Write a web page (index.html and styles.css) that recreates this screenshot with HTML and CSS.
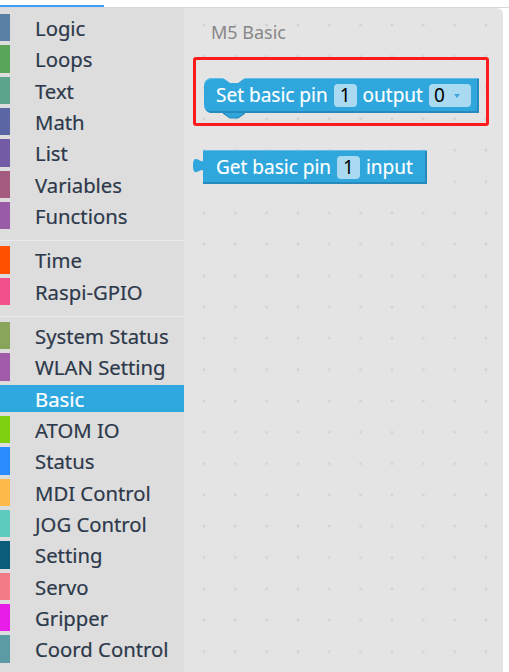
FILE: index.html
```html
<!DOCTYPE html>
<html lang="en">
<head>
<meta charset="utf-8">
<title>M5 Basic</title>
<link rel="stylesheet" href="styles.css">
</head>
<body>
<header class="topbar"><div class="tab-line"></div></header>
<div class="main">
  <nav class="toolbox">
    <div class="cat c-logic"><span class="swatch"></span><span class="label">Logic</span></div>
    <div class="cat c-loops"><span class="swatch"></span><span class="label">Loops</span></div>
    <div class="cat c-text"><span class="swatch"></span><span class="label">Text</span></div>
    <div class="cat c-math"><span class="swatch"></span><span class="label">Math</span></div>
    <div class="cat c-list"><span class="swatch"></span><span class="label">List</span></div>
    <div class="cat c-vars"><span class="swatch"></span><span class="label">Variables</span></div>
    <div class="cat c-func"><span class="swatch"></span><span class="label">Functions</span></div>
    <div class="sep"></div>
    <div class="cat c-time"><span class="swatch"></span><span class="label">Time</span></div>
    <div class="cat c-gpio"><span class="swatch"></span><span class="label">Raspi-GPIO</span></div>
    <div class="sep"></div>
    <div class="cat c-sys"><span class="swatch"></span><span class="label">System Status</span></div>
    <div class="cat c-wlan"><span class="swatch"></span><span class="label">WLAN Setting</span></div>
    <div class="cat c-basic selected"><span class="swatch"></span><span class="label">Basic</span></div>
    <div class="cat c-atom"><span class="swatch"></span><span class="label">ATOM IO</span></div>
    <div class="cat c-status"><span class="swatch"></span><span class="label">Status</span></div>
    <div class="cat c-mdi"><span class="swatch"></span><span class="label">MDI Control</span></div>
    <div class="cat c-jog"><span class="swatch"></span><span class="label">JOG Control</span></div>
    <div class="cat c-setting"><span class="swatch"></span><span class="label">Setting</span></div>
    <div class="cat c-servo"><span class="swatch"></span><span class="label">Servo</span></div>
    <div class="cat c-grip"><span class="swatch"></span><span class="label">Gripper</span></div>
    <div class="cat c-coord"><span class="swatch"></span><span class="label">Coord Control</span></div>
  </nav>
  <section class="workspace">
    <div class="flyout-title">M5 Basic</div>

    <div class="block block-set">
      <svg class="notch" width="22" height="5" viewBox="0 0 22 5"><path d="M0 0 L7 5 L15 5 L22 0 Z" fill="#e4e4e4"/></svg>
      <span class="btext">Set basic pin</span>
      <span class="field">1</span>
      <span class="btext">output</span>
      <span class="field dropdown">0<svg class="caret" width="6" height="4" viewBox="0 0 6 4"><path d="M0 0 L6 0 L3 4 Z" fill="#3ea6dc"/></svg></span>
      <svg class="tab" width="22" height="6" viewBox="0 0 22 6"><path d="M0 0 L7 5 L15 5 L22 0 Z" fill="#2fa7dd"/><path d="M0 0 L7 5 L15 5 L22 0" fill="none" stroke="#2789bc" stroke-width="1.2"/></svg>
    </div>

    <div class="block block-get">
      <svg class="out-tab" width="11" height="16" viewBox="0 0 11 16"><path d="M11 0 C11 10 0 -8 0 7.5 S11 5 11 15.5 Z" fill="#2fa7dd"/></svg>
      <span class="btext">Get basic pin</span>
      <span class="field">1</span>
      <span class="btext">input</span>
    </div>

    <div class="highlight"></div>
  </section>
  <div class="gutter"></div>
</div>
</body>
</html>
```
FILE: styles.css
```css
* { box-sizing: border-box; }
html, body { margin: 0; padding: 0; background: #ffffff; }
body {
  width: 509px;
  height: 672px;
  overflow: hidden;
  font-family: "Noto Sans", "Open Sans", sans-serif;
}

.topbar {
  height: 8px;
  padding-top: 5px;
  background: #ffffff;
  border-bottom: 1px solid #d9d9d9;
}
.tab-line {
  width: 104px;
  height: 2px;
  background: #3d9cf4;
}

.main {
  display: flex;
  height: 664px;
}

/* ---------- toolbox ---------- */
.toolbox {
  width: 184px;
  flex: none;
  background: #dddddd;
  padding-top: 6px;
}
.cat {
  display: flex;
  align-items: stretch;
  height: 27.33px;
  margin-bottom: 4px;
}
.swatch {
  width: 10px;
  flex: none;
  background: var(--c);
}
.label {
  margin-left: 25px;
  padding-top: 2px;
  font-size: 20.3px;
  line-height: 25px;
  color: #2d394b;
  white-space: nowrap;
  -webkit-text-stroke: 0.2px currentColor;
}
.cat.selected { background: #2fa8df; }
.cat.selected .label { color: #ffffff; }

.sep {
  height: 1px;
  margin: 11px 0 5px;
  background: #e9e9e9;
}

.c-logic   { --c: #5b80a5; }
.c-loops   { --c: #5ba55b; }
.c-text    { --c: #5ba58c; }
.c-math    { --c: #5b67a5; }
.c-list    { --c: #745ba5; }
.c-vars    { --c: #a55b80; }
.c-func    { --c: #995ba5; }
.c-time    { --c: #ff5000; }
.c-gpio    { --c: #f0508b; }
.c-sys     { --c: #88a55b; }
.c-wlan    { --c: #a25ba8; }
.c-basic   { --c: #2fa8df; }
.c-atom    { --c: #7fd00e; }
.c-status  { --c: #2b8cff; }
.c-mdi     { --c: #fdb94a; }
.c-jog     { --c: #5ecbbe; }
.c-setting { --c: #0c5b7b; }
.c-servo   { --c: #f27b87; }
.c-grip    { --c: #e81de8; }
.c-coord   { --c: #5c9aa4; }

/* ---------- workspace ---------- */
.workspace {
  position: relative;
  width: 319px;
  flex: none;
  border-top-right-radius: 6px;
  background-color: #e4e4e4;
  background-image: radial-gradient(circle, #d2d2d2 1.1px, rgba(210,210,210,0) 1.7px);
  background-size: 31.33px 31.33px;
  background-position: 4.33px 1.33px;
  padding: 12px 0 0 27px;
}
.gutter { flex: 1; background: #ffffff; }

.flyout-title {
  font-size: 18px;
  line-height: 24px;
  color: #878787;
}

.block {
  position: absolute;
  display: flex;
  align-items: center;
  gap: 6px;
  background: #2fa7dd;
  color: #ffffff;
  box-shadow: inset 0 1px 0 #62bfe9, inset -2px -2px 0 #2789bc;
}
.btext {
  font-size: 19px;
  line-height: 23px;
  white-space: nowrap;
  -webkit-text-stroke: 0.15px currentColor;
}
.field {
  display: flex;
  align-items: center;
  height: 23px;
  padding: 0 6px;
  border-radius: 4px;
  background: #a9daf2;
  color: #000000;
  font-size: 19px;
  line-height: 23px;
}
.field.dropdown {
  padding: 0 11px 0 5px;
  gap: 9px;
}
.caret { display: block; margin-top: 1px; }

.block-set {
  left: 20px;
  top: 70px;
  height: 35px;
  padding: 0 8px 0 12px;
  border-radius: 8px 0 0 8px;
}
.block-set .notch {
  position: absolute;
  left: 19px;
  top: 0;
}
.block-set .tab {
  position: absolute;
  left: 19px;
  top: 35px;
}

.block-get {
  left: 19px;
  top: 142px;
  height: 34px;
  padding: 0 14px 0 13px;
}
.out-tab {
  position: absolute;
  left: -10px;
  top: 8px;
}

.highlight {
  position: absolute;
  left: 9px;
  top: 49px;
  width: 296px;
  height: 69px;
  border: 3px solid #fe1b1b;
  border-radius: 3px;
}
```
